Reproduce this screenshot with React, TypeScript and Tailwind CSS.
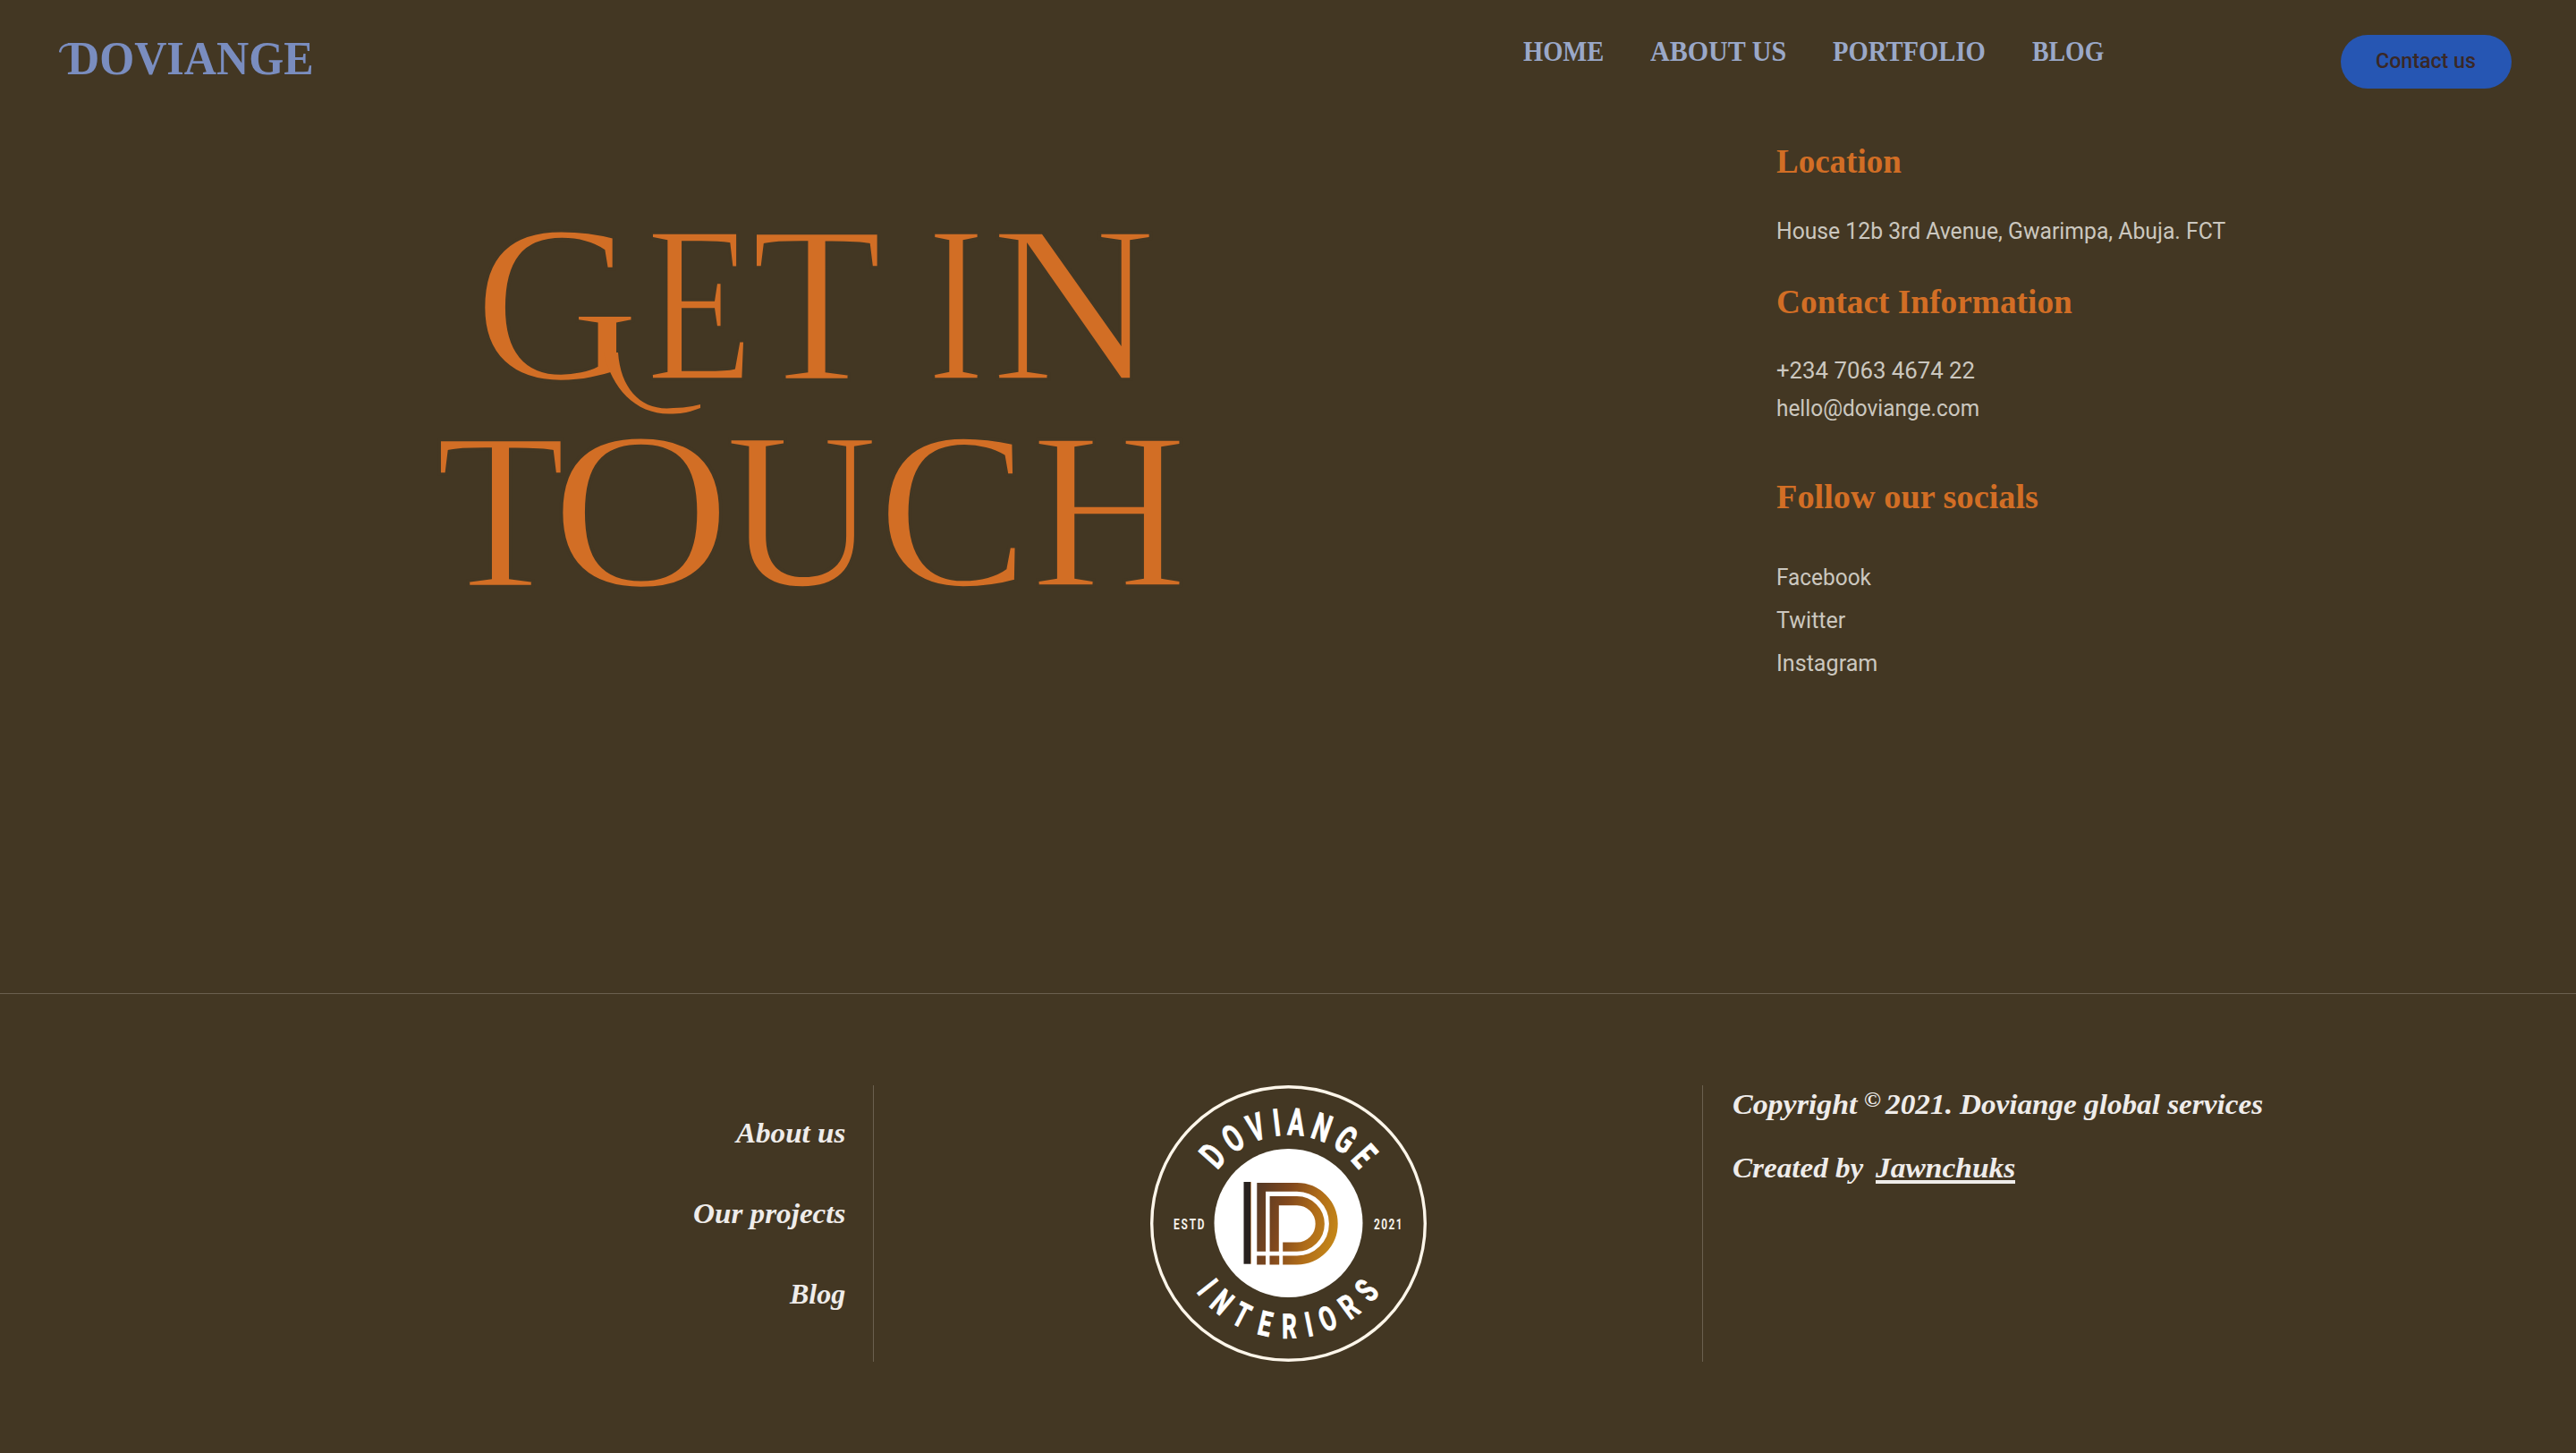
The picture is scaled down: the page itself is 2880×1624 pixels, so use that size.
import { useLayoutEffect, useRef, useState, type ReactNode } from "react";

/** Condenses or widens a single line so that it fills the width set by `className`. */
function Fit({ className = "", children }: { className?: string; children: ReactNode }) {
  const outer = useRef<HTMLSpanElement>(null);
  const inner = useRef<HTMLSpanElement>(null);
  const [scale, setScale] = useState(1);
  useLayoutEffect(() => {
    if (outer.current && inner.current && inner.current.offsetWidth) {
      setScale(outer.current.clientWidth / inner.current.offsetWidth);
    }
  }, []);
  return (
    <span ref={outer} className={`block shrink-0 whitespace-nowrap ${className}`}>
      <span ref={inner} className="inline-block origin-left align-top" style={{ transform: `scaleX(${scale})` }}>
        {children}
      </span>
    </span>
  );
}

const navItems = [
  { label: "HOME", width: "w-[90px]" },
  { label: "ABOUT US", width: "w-[152px]" },
  { label: "PORTFOLIO", width: "w-[171px]" },
  { label: "BLOG", width: "w-[80px]" },
];

const heroTop = [
  { ch: "G", cls: "w-[185px]" },
  { ch: "E", cls: "ml-[8px] w-[119px]" },
  { ch: "T", cls: "-ml-[2px] w-[146px]" },
  { ch: "I", cls: "ml-[51px] w-[64px]" },
  { ch: "N", cls: "ml-[7px] w-[184px]" },
];

const heroBottom = [
  { ch: "T", cls: "w-[145px]" },
  { ch: "O", cls: "-ml-[16px] w-[201px]" },
  { ch: "U", cls: "-ml-[6px] w-[170px]" },
  { ch: "C", cls: "w-[169px]" },
  { ch: "H", cls: "ml-[3px] w-[174px]" },
];

const socials = [
  { label: "Facebook", width: "w-[106px]" },
  { label: "Twitter", width: "w-[77px]" },
  { label: "Instagram", width: "w-[113px]" },
];

const footerLinks = [
  { label: "About us", width: "w-[122px]" },
  { label: "Our projects", width: "w-[170px]" },
  { label: "Blog", width: "w-[62px]" },
];

const arcTop: [string, number][] = [
  ["D", -48.1], ["O", -33], ["V", -18.7], ["I", -6.7], ["A", 4.5], ["N", 19.3], ["G", 34.3], ["E", 48.4],
];
const arcBottom: [string, number][] = [
  ["I", 51.9], ["N", 40.3], ["T", 27], ["E", 13], ["R", -0.5], ["I", -11.4], ["O", -22.3], ["R", -36.1], ["S", -49.4],
];

function Badge() {
  return (
    <svg width="309" height="309" viewBox="0 0 309 309" className="block font-['Roboto',sans-serif] font-bold">
      <defs>
        <linearGradient id="gold" gradientUnits="userSpaceOnUse" x1="116" y1="140" x2="208" y2="165">
          <stop offset="0" stopColor="#583a24" />
          <stop offset="0.35" stopColor="#81481d" />
          <stop offset="0.7" stopColor="#b06d19" />
          <stop offset="1" stopColor="#c48618" />
        </linearGradient>
      </defs>
      <circle cx="154.5" cy="154.5" r="152.8" fill="none" stroke="#fdf6ea" strokeWidth="3.4" />
      <circle cx="154.5" cy="154" r="83" fill="#fff" />
      <g fill="#fff" stroke="#fff" strokeWidth="0.9" textAnchor="middle">
        {arcTop.map(([ch, a]) => (
          <text key={ch} fontSize="42" transform={`translate(154.5 154.5) rotate(${a}) translate(0 -99) scale(0.66 1)`}>
            {ch}
          </text>
        ))}
        {arcBottom.map(([ch, a], i) => (
          <text key={i} fontSize="38" transform={`translate(154.5 154.5) rotate(${a}) translate(0 128.2) scale(0.68 1)`}>
            {ch}
          </text>
        ))}
      </g>
      <g fill="#f6f2ea" fontSize="16.5">
        <text transform="translate(26 161) scale(0.72 1)" textLength="48">ESTD</text>
        <text transform="translate(250 161) scale(0.72 1)" textLength="44">2021</text>
      </g>
      <rect x="104.5" y="108" width="7.5" height="91.7" fill="#28221f" />
      <rect x="112" y="108" width="1" height="91.7" fill="#b98a5a" />
      <g fill="none" stroke="url(#gold)">
        <path d="M124.2 185.7V113.9H164a40.8 40.8 0 0 1 0 81.6H148.2" strokeWidth="9.8" />
        <path d="M138.7 185.7V129.2H164a25.75 25.75 0 0 1 0 51.5H148.2" strokeWidth="10.2" />
        <path d="M119.2 195.5H129M133.5 195.5H144.2" strokeWidth="9.8" />
      </g>
    </svg>
  );
}

function Heading({ children, className }: { children: ReactNode; className: string }) {
  return (
    <h2 className="flex font-['Liberation_Serif',serif] text-[37px] leading-[44px] font-bold text-[#d26e25]">
      <Fit className={className}>{children}</Fit>
    </h2>
  );
}

export default function App() {
  return (
    <div className="flex h-[1624px] w-[2880px] flex-col overflow-hidden bg-[#433723] font-['Roboto',sans-serif]">
      <header className="flex h-[138px] shrink-0 items-start pl-[75px]">
        <a className="relative mt-[35px] flex font-['Liberation_Serif',serif] text-[53px] leading-[60px] font-bold text-[#7a8dbf]">
          <Fit className="w-[276px]">DOVIANGE</Fit>
          <svg className="absolute top-[12px] -left-[9px]" width="18" height="14" viewBox="0 0 18 14">
            <path d="M1 11.500C2 5 6 2.200 17 2.200" fill="none" stroke="#7a8dbf" strokeWidth="2.400" />
          </svg>
        </a>
        <nav className="mt-[37px] ml-[1352px] flex gap-[52px] font-['Liberation_Serif',serif] text-[32px] leading-[40px] font-bold text-[#9aa8c8]">
          {navItems.map((n) => (
            <a key={n.label}>
              <Fit className={n.width}>{n.label}</Fit>
            </a>
          ))}
        </nav>
        <button className="mt-[39px] ml-[265px] flex h-[60px] w-[191px] items-center justify-center rounded-full bg-[#2656b3] pr-[3px] text-[23px] leading-[60px] font-medium text-[#3a2826]">
          <Fit className="w-[112px]">Contact us</Fit>
        </button>
      </header>

      <main className="flex h-[972px] shrink-0">
        <h1 className="w-[1986px] shrink-0 pt-[86px] font-['Liberation_Serif',serif] text-[251px] leading-[231px] text-[#d26e25]">
          <span className="relative flex pl-[530px] [-webkit-text-stroke:3.500px_#433723]">
            {heroTop.map((l) => (
              <Fit key={l.ch} className={l.cls}>{l.ch}</Fit>
            ))}
            <svg className="absolute top-[170px] left-[674px]" width="112" height="76" viewBox="0 0 112 76">
              <path d="M1 0H17C20 42 44 66 79 62Q95 62 109 58V62C96 67 88 68.500 74 68.500C36 68.500 10 40 1 0Z" fill="#d26e25" />
            </svg>
          </span>
          <span className="flex pl-[487px] [-webkit-text-stroke:3.500px_#433723]">
            {heroBottom.map((l) => (
              <Fit key={l.ch} className={l.cls}>{l.ch}</Fit>
            ))}
          </span>
        </h1>

        <section className="pt-[21px] text-[26px] text-[#cbc7bf]">
          <Heading className="w-[140px]">Location</Heading>
          <p className="mt-[37px] leading-[36px]">
            <Fit className="w-[502px]">House 12b 3rd Avenue, Gwarimpa, Abuja. FCT</Fit>
          </p>
          <div className="mt-[40px]">
            <Heading className="w-[331px]">Contact Information</Heading>
          </div>
          <div className="mt-[33px] leading-[42px]">
            <Fit className="w-[222px]">+234 7063 4674 22</Fit>
            <Fit className="w-[227px]">hello@doviange.com</Fit>
          </div>
          <div className="mt-[57px]">
            <Heading className="w-[293px]">Follow our socials</Heading>
          </div>
          <ul className="mt-[43px] leading-[48px]">
            {socials.map((s) => (
              <li key={s.label}>
                <Fit className={s.width}>{s.label}</Fit>
              </li>
            ))}
          </ul>
        </section>
      </main>

      <footer className="flex grow items-start border-t border-[#6a604f] pt-[102px] font-['Liberation_Serif',serif] text-[32px] font-bold text-[#efecea] italic">
        <ul className="flex h-[309px] w-[977px] shrink-0 flex-col items-end border-r border-[#6a604f] pt-[8px] pr-[31px] leading-[90px]">
          {footerLinks.map((l) => (
            <li key={l.label}>
              <Fit className={l.width}>{l.label}</Fit>
            </li>
          ))}
        </ul>
        <div className="flex w-[926px] shrink-0 justify-center not-italic">
          <Badge />
        </div>
        <div className="h-[309px] border-l border-[#6a604f] pt-px pl-[33px] leading-[40px]">
          <p className="flex">
            <Fit className="w-[140px]">Copyright</Fit>
            <Fit className="ml-[7px] w-[19px] -translate-y-[5px] text-[24px]">©</Fit>
            <Fit className="ml-[5px] w-[75px]">2021.</Fit>
            <Fit className="ml-[8px] w-[339px]">Doviange global services</Fit>
          </p>
          <p className="mt-[31px] flex">
            <Fit className="w-[146px]">Created by</Fit>
            <a className="ml-[14px] flex h-[38px] border-b-4 border-[#efecea]">
              <Fit className="w-[156px]">Jawnchuks</Fit>
            </a>
          </p>
        </div>
      </footer>
    </div>
  );
}
